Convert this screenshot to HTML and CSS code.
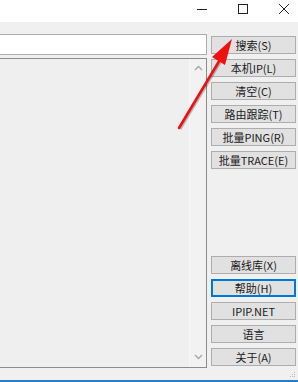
FILE: index.html
```
<!DOCTYPE html>
<html lang="zh-CN">
<head>
  <meta charset="UTF-8">
  <title>IP查询</title>
  <link rel="stylesheet" href="styles.css">
</head>
<body>
  <!-- Title bar -->
  <div class="titlebar">
    <span class="ctl">
      <svg width="10" height="10" viewBox="0 0 10 10"><path d="M0 5.5h10" stroke="#222" stroke-width="1"/></svg>
    </span>
    <span class="ctl">
      <svg width="10" height="10" viewBox="0 0 10 10"><rect x="0.5" y="0.5" width="9" height="9" fill="none" stroke="#222" stroke-width="1"/></svg>
    </span>
    <span class="ctl">
      <svg width="10" height="10" viewBox="0 0 10 10"><path d="M0 0L10 10M10 0L0 10" stroke="#222" stroke-width="1"/></svg>
    </span>
  </div>

  <!-- Client area -->
  <div class="client">
    <div class="left">
      <div class="input"></div>
      <div class="list">
        <div class="scrollbar">
          <svg width="9" height="6" viewBox="0 0 9 6"><path d="M1 5L4.5 1.5L8 5" fill="none" stroke="#a6a6a6" stroke-width="1.4"/></svg>
          <svg width="9" height="6" viewBox="0 0 9 6"><path d="M1 1L4.5 4.5L8 1" fill="none" stroke="#a6a6a6" stroke-width="1.4"/></svg>
        </div>
      </div>
    </div>

    <div class="side">
      <div class="group">
        <button class="btn">搜索(S)</button>
        <button class="btn">本机IP(L)</button>
        <button class="btn">清空(C)</button>
        <button class="btn">路由跟踪(T)</button>
        <button class="btn">批量PING(R)</button>
        <button class="btn">批量TRACE(E)</button>
      </div>
      <div class="group bottom">
        <button class="btn">离线库(X)</button>
        <button class="btn default">帮助(H)</button>
        <button class="btn">IPIP.NET</button>
        <button class="btn">语言</button>
        <button class="btn">关于(A)</button>
      </div>
    </div>
  </div>

  <div class="frame-bottom"></div>

  <!-- Annotation arrow -->
  <svg class="arrow" width="298" height="382" viewBox="0 0 298 382">
    <path d="M179 128L221 58" stroke="rgba(0,0,0,0.25)" stroke-width="3" transform="translate(1,1)"/>
    <path d="M179 128L221 58" stroke="#ee1111" stroke-width="2.6" stroke-linecap="round"/>
    <polygon points="232,39 225,65 212,57" fill="#ee1111"/>
  </svg>

  <svg class="grip" width="6" height="6" viewBox="0 0 6 6">
    <rect x="4" y="0" width="1" height="1" fill="#bbb"/>
    <rect x="2" y="2" width="1" height="1" fill="#bbb"/>
    <rect x="4" y="2" width="1" height="1" fill="#bbb"/>
    <rect x="0" y="4" width="1" height="1" fill="#bbb"/>
    <rect x="2" y="4" width="1" height="1" fill="#bbb"/>
    <rect x="4" y="4" width="1" height="1" fill="#bbb"/>
  </svg>
</body>
</html>
```
FILE: styles.css
```
* {
  margin: 0;
  padding: 0;
  box-sizing: border-box;
}
body {
  width: 298px;
  height: 382px;
  overflow: hidden;
  position: relative;
  background: #f0f0f0;
  font-family: "Noto Sans CJK SC", "Liberation Sans", sans-serif;
  font-size: 11px;
  color: #000;
}

/* Title bar */
.titlebar {
  height: 22px;
  background: #fff;
  display: flex;
  justify-content: flex-end;
  align-items: flex-start;
  padding-top: 4px;
  padding-right: 9px;
  gap: 31px;
}
.ctl {
  display: block;
  width: 10px;
  height: 10px;
}
.ctl svg {
  display: block;
}

/* Client */
.client {
  height: 358px;
  display: flex;
  padding-top: 12px;
}
.left {
  width: 208px;
  margin-left: -1px;
  display: flex;
  flex-direction: column;
  gap: 3px;
}
.input {
  height: 21px;
  background: #fff;
  border: 1px solid #adadad;
}
.list {
  height: 310px;
  background: #efefef;
  border: 1px solid #8c8c8c;
  display: flex;
  justify-content: flex-end;
}
.scrollbar {
  width: 17px;
  background: #f2f2f2;
  border-left: 1px solid #f7f7f7;
  display: flex;
  flex-direction: column;
  justify-content: space-between;
  align-items: center;
  padding: 6px 0 7px;
}
.scrollbar svg {
  display: block;
}

/* Buttons */
.side {
  width: 85px;
  margin-left: 4px;
  padding-top: 2px;
  padding-bottom: 14px;
  display: flex;
  flex-direction: column;
  justify-content: space-between;
}
.group {
  display: flex;
  flex-direction: column;
  gap: 5px;
}
.btn {
  height: 18px;
  background: #e1e1e1;
  border: 1px solid #adadad;
  font-family: inherit;
  font-size: 11px;
  line-height: 16px;
  color: #1a1a1a;
  text-align: center;
}
.btn.default {
  border: 1px solid #0078d7;
  box-shadow: inset 0 0 0 1px #0078d7;
}

.frame-bottom {
  height: 2px;
  background: #2b7bc9;
}

/* Overlay arrow drawn over the screenshot */
.arrow {
  position: absolute;
  left: 0;
  top: 0;
  pointer-events: none;
}
.grip {
  position: absolute;
  right: 2px;
  bottom: 4px;
}
```
